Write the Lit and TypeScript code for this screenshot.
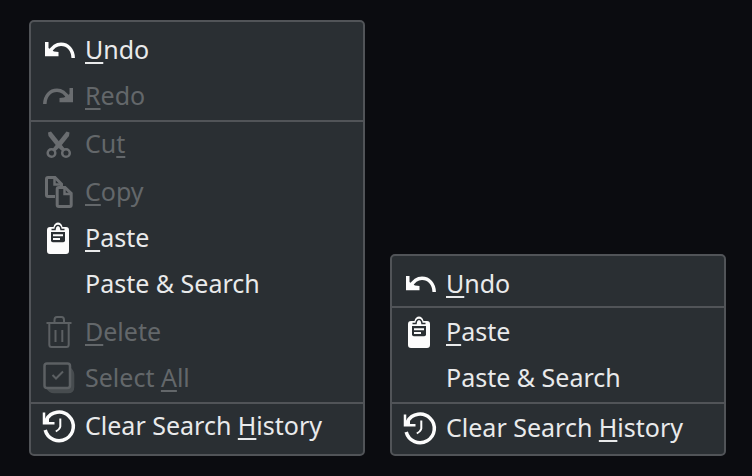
import { LitElement, html, svg, css, nothing, SVGTemplateResult } from "lit";
import { customElement, property } from "lit/decorators.js";
import { classMap } from "lit/directives/class-map.js";

interface Entry {
  /** An underscore stands before the mnemonic letter. */
  label: string;
  icon?: string;
  disabled?: boolean;
  spaced?: boolean;
}

type Row = Entry | "separator";

const icons: Record<string, SVGTemplateResult> = {
  undo: svg`
    <path class="solid" d="M2 7H5.500V13L11 16.500L15.500 17V21.300H2Z"/>
    <path class="line heavy" d="M6.500 17.500C9.500 12 13.500 9.300 18 9.300C25 9.300 30 15 30.200 23"/>`,
  redo: svg`
    <path class="solid" d="M30 7H26.500V13L21 16.500L16.500 17V21.300H30Z"/>
    <path class="line heavy" d="M25.500 17.500C22.500 12 18.500 9.300 14 9.300C7 9.300 2 15 1.800 23"/>`,
  cut: svg`
    <circle class="line" cx="8.500" cy="24" r="3.800"/>
    <circle class="line" cx="23" cy="24" r="3.800"/>
    <path class="solid" d="M5 3.500L8 2.500L16 12.500L22 20L19 22L13.500 17L5.500 7Z"/>
    <path class="solid" d="M26.500 3.500L23.500 2.500L15.500 12.500L9.500 20L12.500 22L18 17L26 7Z"/>`,
  copy: svg`
    <path class="line thick" d="M12 19.500H5Q3.500 19.500 3.500 18V2Q3.500 0.500 5 0.500H12L18.500 7V10"/>
    <path class="line" d="M11.500 1V7.500H18"/>
    <path class="line thick" d="M14.200 12Q14.200 10.500 15.700 10.500H22L28.200 16.500V28Q28.200 29.500 26.700 29.500H15.700Q14.200 29.500 14.200 28Z"/>
    <path class="line" d="M21.500 11V17H28"/>`,
  paste: svg`
    <path class="solid" d="M7 4H10.500C11.500 -2 18.500 -2 19.500 4H23Q26 4 26 7V28Q26 31 23 31H7Q4 31 4 28V7Q4 4 7 4Z"/>
    <path class="gap" d="M8.500 6.500H12C12.500 1 17.500 1 18 6.500H21.500"/>
    <circle class="solid" cx="15" cy="4.800" r="1.200"/>
    <path class="hole" d="M8 9H22V17.500Q22 19.300 20.200 19.300H9.800Q8 19.300 8 17.500Z"/>
    <path class="line thin" d="M10 12.300H20M10 16H17"/>`,
  trash: svg`
    <path class="line thin" d="M3.500 6H28.500M11.500 5.500V3Q11.500 0 14 0H18.500Q21 0 21 3V5.500"/>
    <path class="line thin" d="M6.300 6V27.500Q6.300 30 8.500 30H23.500Q25.700 30 25.700 27.500V6M12.500 13V25M19.300 13V25"/>`,
  select: svg`
    <path class="faint" d="M28 5Q31.300 8 31.300 12V24Q31.300 30.300 25 30.300H11Q6 30.300 3 25H25Q28 25 28 22Z"/>
    <rect class="line" x="1.500" y="0.500" width="25.500" height="24.500" rx="2.500"/>
    <path class="line thin" d="M9.500 12L13 15.500L20 8.500"/>`,
  history: svg`
    <path class="line heavy" d="M3.500 8.500A14.300 14.300 0 1 1 2.200 19"/>
    <path class="line" d="M1 1.500V12.300H11.500"/>
    <path class="solid" d="M2 8L6 6V11.500H2Z"/>
    <path class="line thin" d="M17.300 7.500V15.500Q17 18 12.800 20.500"/>`,
};

@customElement("context-menu")
export class ContextMenu extends LitElement {
  @property({ attribute: false }) rows: Row[] = [];
  @property() name = "";

  static styles = css`
    :host {
      display: block;
      flex: 1 1 0;
      min-width: 0;
    }
    .menu {
      box-sizing: border-box;
      padding: 6px 0 4px;
      border: 2px solid #515458;
      border-radius: 5px;
      background: #2a2f33;
    }
    .item {
      display: flex;
      align-items: center;
      gap: 10px;
      box-sizing: border-box;
      width: 100%;
      margin: 0;
      padding: 6px 12px;
      border: 0;
      background: none;
      color: #e9eaeb;
      font: 25px/30px "Noto Sans", "Open Sans", sans-serif;
      text-align: left;
      white-space: nowrap;
    }
    .item:disabled {
      color: #63676a;
    }
    .label {
      padding-bottom: 4px;
    }
    .spaced {
      margin-top: 2px;
    }
    .separator {
      height: 2px;
      margin: 0;
      border: 0;
      background: #515458;
    }
    :host([compact]) .menu {
      padding-bottom: 2px;
    }
    :host([compact]) .item + .separator:nth-child(2) {
      margin-top: -2px;
    }
    :host([compact]) .separator + .item {
      margin-top: 2px;
    }
    .mnemonic {
      text-decoration: underline;
      text-decoration-thickness: 2px;
      text-decoration-skip-ink: none;
      text-underline-offset: 3px;
    }
    .icon {
      flex: none;
      width: 32px;
      height: 32px;
      overflow: visible;
      color: #fcfcfc;
    }
    .item:disabled .icon {
      color: #6a6d70;
    }
    .item:disabled .icon.trash,
    .item:disabled .icon.select {
      color: #5c6063;
    }
    .solid {
      fill: currentColor;
    }
    .faint {
      fill: currentColor;
      opacity: 0.6;
    }
    .hole {
      fill: #2a2f33;
    }
    .gap {
      fill: none;
      stroke: #2a2f33;
      stroke-width: 1.5;
    }
    .line {
      fill: none;
      stroke: currentColor;
      stroke-width: 2.5;
    }
    .thin {
      stroke-width: 2;
    }
    .thick {
      stroke-width: 3;
    }
    .heavy {
      stroke-width: 3.5;
    }
  `;

  private label(text: string) {
    const at = text.indexOf("_");
    return at < 0
      ? html`<span class="label">${text}</span>`
      : html`<span class="label">${text.slice(0, at)}<span class="mnemonic">${text[at + 1]}</span>${text.slice(at + 2)}</span>`;
  }

  render() {
    return html`<div class="menu" role="menu" aria-label=${this.name}>
      ${this.rows.map((row) =>
        row === "separator"
          ? html`<hr class="separator" />`
          : html`<button
              type="button"
              role="menuitem"
              class=${classMap({ item: true, spaced: !!row.spaced })}
              ?disabled=${!!row.disabled}
            >
              <svg class="icon ${row.icon ?? ""}" viewBox="0 0 32 32" aria-hidden="true">
                ${row.icon ? icons[row.icon] : nothing}
              </svg>
              ${this.label(row.label)}
            </button>`
      )}
    </div>`;
  }
}

const fullMenu: Row[] = [
  { label: "_Undo", icon: "undo" },
  { label: "_Redo", icon: "redo", disabled: true },
  "separator",
  { label: "Cu_t", icon: "cut", disabled: true },
  { label: "_Copy", icon: "copy", disabled: true, spaced: true },
  { label: "_Paste", icon: "paste" },
  { label: "Paste & Search" },
  { label: "_Delete", icon: "trash", disabled: true, spaced: true },
  { label: "Select _All", icon: "select", disabled: true },
  "separator",
  { label: "Clear Search _History", icon: "history" },
];

const shortMenu: Row[] = [
  { label: "_Undo", icon: "undo" },
  "separator",
  { label: "_Paste", icon: "paste" },
  { label: "Paste & Search" },
  "separator",
  { label: "Clear Search _History", icon: "history" },
];

@customElement("app-root")
export class AppRoot extends LitElement {
  static styles = css`
    :host {
      display: block;
      min-height: 100vh;
      background: #0b0c10;
    }
    .page {
      display: flex;
      align-items: flex-end;
      gap: 25px;
      padding: 20px 26px 20px 29px;
    }
  `;

  render() {
    return html`<main class="page">
      <context-menu name="Full edit menu" .rows=${fullMenu}></context-menu>
      <context-menu name="Short edit menu" compact .rows=${shortMenu}></context-menu>
    </main>`;
  }
}
